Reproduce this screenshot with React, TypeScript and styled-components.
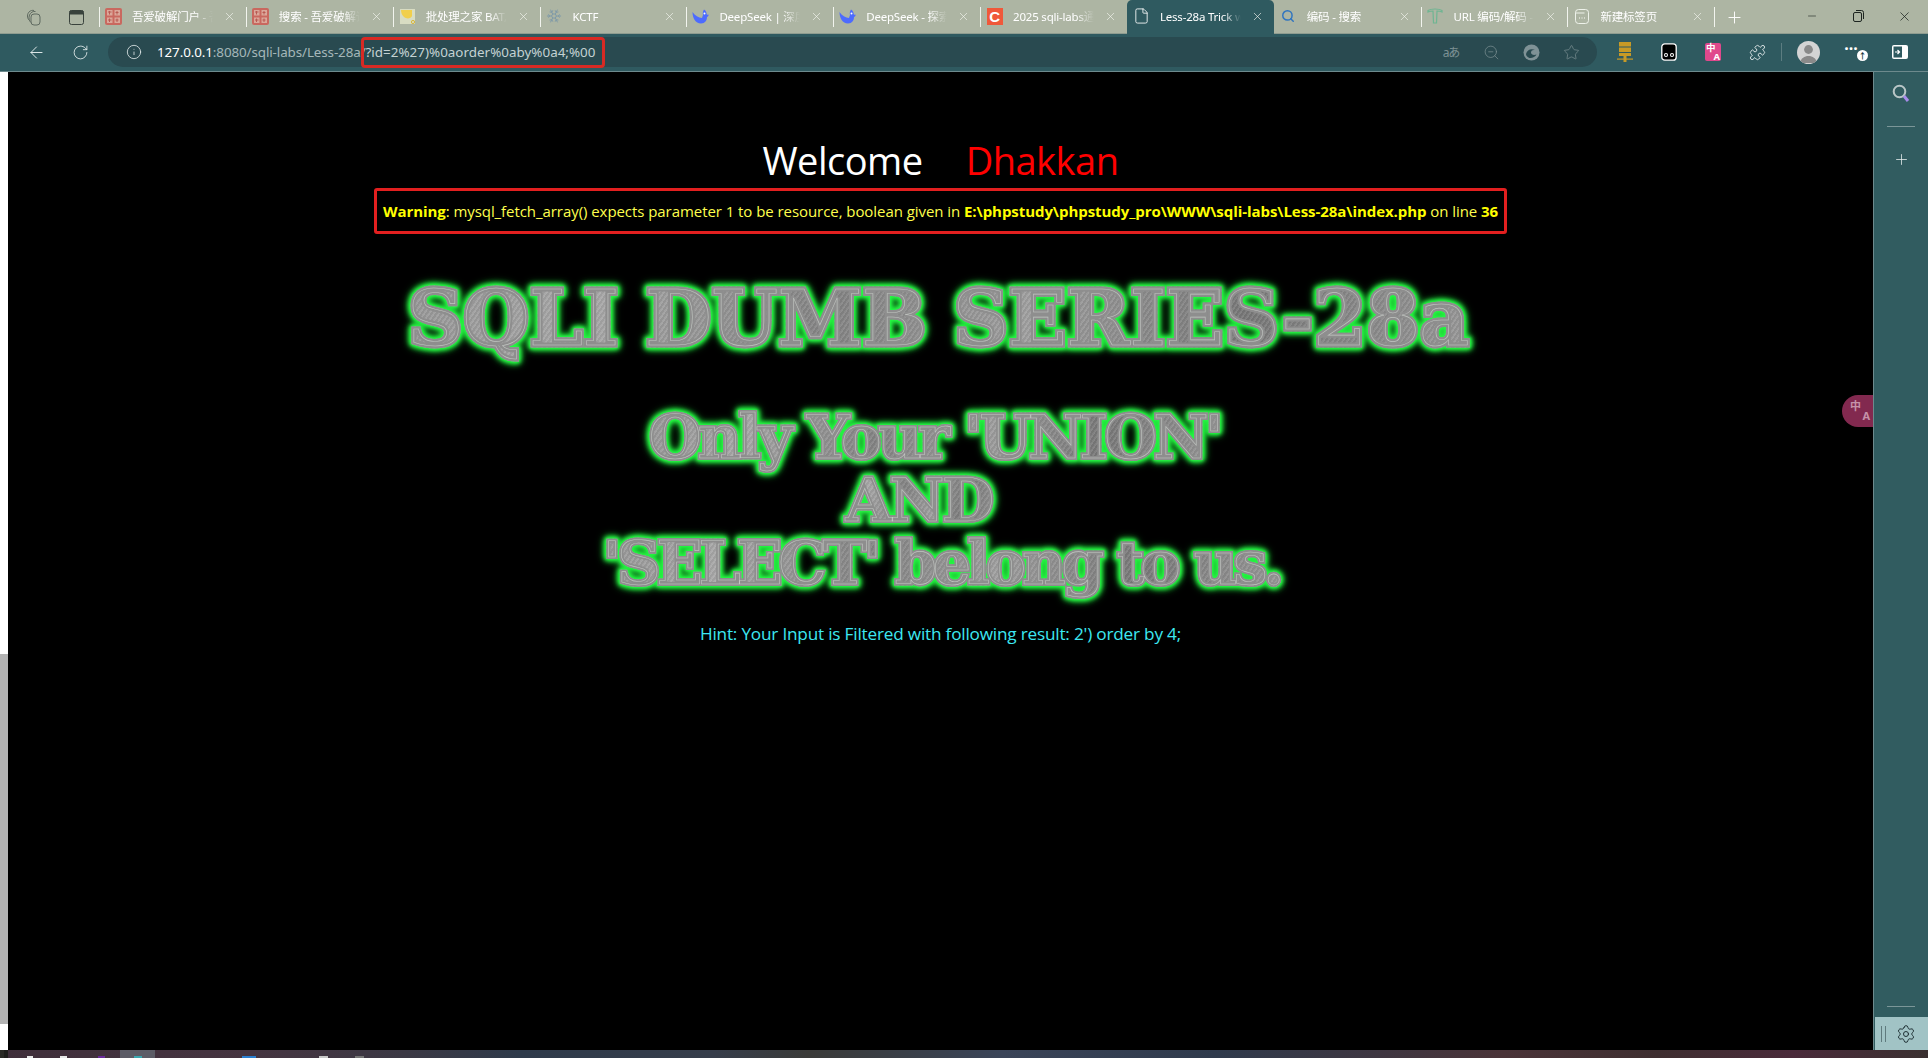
import React from "react";
import styled, { createGlobalStyle } from "styled-components";
import {
  ArrowLeft, RotateCw, Info, ZoomOut, Star, Puzzle, Plus, X, Minus, Settings, File, Search, Snowflake,
} from "lucide-react";

const Global = createGlobalStyle`
  html, body { margin: 0; padding: 0; background: #000; overflow: hidden; }
  * { box-sizing: border-box; }
`;

const UI = `"Noto Sans", "Noto Sans CJK SC", sans-serif`;
const PAGE = `"Open Sans", "Noto Sans", sans-serif`;

const Root = styled.div`
  width: 1928px; height: 1058px; display: flex; flex-direction: column; overflow: hidden; font-family: ${UI};
`;
const TabStrip = styled.div`
  height: 34px; flex: none; background: #adb5a3; display: flex; align-items: stretch; color: #fff;
  box-shadow: inset 0 -1px 0 #8f9c90;
`;
const StripIcon = styled.div`
  width: 42px; flex: none; display: flex; align-items: center; justify-content: center; color: #5f6a60;
`;
const StripLead = styled.div`
  width: 99px; flex: none; display: flex; padding-left: 13px;
`;
const Tab = styled.div<{ $active?: boolean; $sep?: boolean }>`
  width: 146.85px; flex: none; display: flex; align-items: center; padding: 0 10px 2px 6px; gap: 10px; position: relative;
  background: ${p => (p.$active ? "#2f5a60" : "transparent")};
  border-radius: ${p => (p.$active ? "5px 5px 0 0" : "0")};
  &::before {
    content: "";
    display: ${p => (p.$sep ? "block" : "none")};
    position: absolute; left: 0; top: 7px; bottom: 7px; width: 1px; background: #f2f4ee;
  }
`;
const Fav = styled.span`
  width: 17px; height: 17px; flex: none; display: flex; align-items: center; justify-content: center;
`;
const TabTitle = styled.span`
  flex: 1; min-width: 0; font-size: 11.5px; letter-spacing: -0.2px; white-space: nowrap; overflow: hidden;
  mask-image: linear-gradient(90deg, #000 78%, transparent 100%);
`;
const CloseWrap = styled.span`
  flex: none; display: flex; color: #f4f6f0;
`;
const NewTab = styled.div`
  width: 40px; flex: none; display: flex; align-items: center; justify-content: center; color: #fff; border-left: 1px solid #f2f4ee; margin: 7px 0 7px 0;
`;
const WinControls = styled.div`
  margin-left: auto; display: flex; width: 139px; color: #1d2420; padding-bottom: 2px;
`;
const WinButton = styled.div`
  flex: 1; display: flex; align-items: center; justify-content: center;
`;
const CFav = styled.span`
  width: 16px; height: 17px; background: #f0583a; color: #fff; font: 700 15px/17px "Liberation Sans", sans-serif; text-align: center;
`;

const Toolbar = styled.div`
  height: 38px; flex: none; background: #2f5a60; display: flex; align-items: center; color: #dfe8e8; border-bottom: 1px solid #6d8a8d; padding-bottom: 1px;
`;
const NavButton = styled.div`
  width: 44px; flex: none; display: flex; align-items: center; justify-content: center; color: #e6eeee;
`;
const NavGroup = styled.div`
  display: flex; width: 108px; padding-left: 14px; flex: none;
`;
const Address = styled.div`
  width: 1489px; height: 30px; flex: none; background: #294a50; border-radius: 15px; display: flex; align-items: center; padding: 0 6px 0 18px;
`;
const InfoWrap = styled.span`
  width: 31px; flex: none; display: flex; color: #e6eeee;
`;
const Url = styled.div`
  flex: 1; font-size: 13.4px; color: #a5b7b9; white-space: nowrap; display: flex; align-items: center; letter-spacing: -0.1px;
`;
const Host = styled.span`
  color: #fff;
`;
const Marked = styled.span`
  border: 3px solid #d82a24; border-radius: 4px; padding: 2px 7px 2px 2px; margin-left: -5px; color: #c4d2d3; line-height: 21px; letter-spacing: 0.02px;
`;
const AddressIcons = styled.div`
  display: flex; flex: none; color: #7d9194;
`;
const AddressIcon = styled.span`
  width: 40px; display: flex; align-items: center; justify-content: center; font-size: 12px; letter-spacing: -1px;
`;
const Extensions = styled.div`
  flex: 1; display: flex; align-items: center; padding-left: 6px;
`;
const Ext = styled.div<{ $w?: number }>`
  width: ${p => p.$w ?? 44}px; flex: none; display: flex; align-items: center; justify-content: center; position: relative; color: #f0f4f4;
`;
const ExtDivider = styled.span`
  width: 1px; height: 18px; background: #5c7d81; flex: none; margin: 0 4px 0 2px;
`;
const TileGlyphs = styled.span<{ $size: number }>`
  display: flex; flex-direction: column; font-weight: 700; font-size: ${p => p.$size}px; line-height: ${p => p.$size - 1}px; width: 100%;
`;
const GlyphTop = styled.span`
  text-align: left;
`;
const GlyphBottom = styled.span`
  text-align: right;
`;
const TranslateTile = styled.span`
  width: 16px; height: 18px; background: #e0488c; border-radius: 2px; color: #fff; display: flex; padding: 1px 1px 0;
`;
const Avatar = styled.span`
  width: 23px; height: 23px; border-radius: 50%; display: block; overflow: hidden;
`;
const UpdateBadge = styled.span`
  position: absolute; left: 27px; top: -1px; width: 11px; height: 11px; border-radius: 50%; background: #fff; color: #20383c; font-size: 8px; line-height: 11px; text-align: center; font-weight: 700;
`;
const Dots = styled.span`
  color: #fff; font-size: 16px; font-weight: 700; line-height: 10px; margin-top: -8px; margin-left: -6px;
`;

const Body = styled.div`
  flex: 1; min-height: 0; display: flex; position: relative;
`;
const Rail = styled.div`
  width: 8px; flex: none; background: #fff; padding-top: 582px;
`;
const RailThumb = styled.div`
  height: 370px; background: #b3b3b3;
`;
const Page = styled.main`
  flex: 1; background: #000; display: flex; flex-direction: column; align-items: center; font-family: ${PAGE}; padding-top: 64px;
`;
const Welcome = styled.div`
  display: flex; gap: 43px; font-size: 38px; line-height: 48px; color: #fff; letter-spacing: -0.5px;
`;
const Red = styled.span`
  color: #f00;
`;
const WarningBox = styled.div`
  margin-top: 4px; width: 1133px; height: 46px; border: 3px solid #e21f1f; border-radius: 3px; display: flex; align-items: center; justify-content: center;
  font-size: 15px; color: #ffff4d; white-space: pre; letter-spacing: -0.06px;
  b { color: #ffff00; font-weight: 700; }
`;
const Metal = styled.div<{ $size: number; $spacing: number; $line: number; $shift?: number; $stroke: number }>`
  position: relative; width: fit-content; margin: 0 auto; padding: 0 5px 8px;
  margin-bottom: -8px;
  transform: translateX(${p => p.$shift ?? 0}px);
  font-family: "DejaVu Serif", serif; font-weight: 700; white-space: nowrap; text-align: center;
  font-size: ${p => p.$size}px; letter-spacing: ${p => p.$spacing}px; line-height: ${p => p.$line}px;
  color: transparent;
  -webkit-text-stroke: ${p => p.$stroke}px #8e8e8e;
  background:
    repeating-linear-gradient(125deg, rgba(255,255,255,.08) 0 1px, rgba(0,0,0,.06) 1px 3px, rgba(255,255,255,.03) 3px 4px),
    linear-gradient(100deg, #9a9a9a 0%, #aaa 18%, #858585 40%, #a2a2a2 58%, #7a7a7a 78%, #9c9c9c 100%);
  -webkit-background-clip: text; background-clip: text;
  filter: drop-shadow(0 0 1px #2aff4a) drop-shadow(0 0 2px #24f040) drop-shadow(0 0 2px #24f040) drop-shadow(0 0 3px #1cd036);
  &::after {
    content: attr(data-text);
    position: absolute; left: 5px; top: 0;
    -webkit-text-stroke: 0.6px rgba(225,232,225,.6);
  }
`;
const TitleWrap = styled.div`
  margin-top: 40px; align-self: stretch;
`;
const SloganWrap = styled.div`
  margin-top: 42px; align-self: stretch;
`;
const Hint = styled.div`
  margin-top: 27px; font-size: 17.2px; line-height: 24px; color: #3de8f2; letter-spacing: -0.2px;
`;
const Sidebar = styled.aside`
  width: 55px; flex: none; background: #315c60; border-left: 1px solid #6d8a8d; display: flex; flex-direction: column; align-items: center; padding-top: 10px; color: #e6eeee;
`;
const SideIcon = styled.div`
  height: 24px; display: flex; align-items: center; justify-content: center;
`;
const SideRule = styled.div<{ $gap: number }>`
  width: 28px; height: 1px; flex: none; background: #7b9698; margin: ${p => p.$gap}px 0;
`;
const BottomRule = styled(SideRule)`
  margin-top: auto;
`;
const SideFoot = styled.div`
  align-self: stretch; margin-left: 1px; height: 33px; background: #a1c3c5; display: flex; align-items: center; gap: 10px; padding-left: 6px; color: #1f3034; margin-top: -1px;
`;
const SideBars = styled.span`
  width: 5px; height: 16px; border-left: 1px solid #5f7a7d; border-right: 1px solid #5f7a7d; display: block;
`;
const TranslatePill = styled.div`
  position: absolute; right: 55px; top: 323px; width: 31px; height: 32px; border-radius: 16px 0 0 16px; background: #82294f; color: #c592a8; display: flex; padding: 6px 3px 0 8px;
`;
const Taskbar = styled.footer`
  height: 8px; flex: none; display: flex; align-items: flex-end;
  background: linear-gradient(90deg, #3f2e3a 0, #453440 13%, #3b3844 21%, #2e3a4a 27%, #363d4a 37%, #3a3a38 42%, #3a4458 52%, #2f3a4c 63%, #4a3338 78%, #3e2e30 86%, #4a2a3a 93%, #3a3030 100%);
`;
const TaskCorner = styled.span`
  width: 8px; height: 8px; flex: none; background: #2a2a26; border-left: 3px solid #2a2a26; border-right: 4px solid #1e1e1c; display: block;
`;
const TaskItem = styled.span<{ $w: number; $left: number; $c: string }>`
  width: ${p => p.$w}px; height: 2px; margin-left: ${p => p.$left}px; background: ${p => p.$c}; flex: none; display: block;
`;
const TaskActive = styled.span`
  width: 35px; height: 8px; margin-left: 15px; background: #5c5c66; flex: none; display: flex; align-items: flex-end; justify-content: center;
`;

const Pojie = () => (
  <svg width="17" height="17" viewBox="0 0 17 17">
    <rect width="17" height="17" rx="2" fill="#c9685f" />
    <rect x="2" y="2" width="5.500" height="5.500" fill="#dba79a" />
    <rect x="9.500" y="2" width="5.500" height="5.500" fill="#dba79a" />
    <rect x="2" y="9.500" width="5.500" height="5.500" fill="#dba79a" />
    <rect x="9.500" y="9.500" width="5.500" height="5.500" fill="#dba79a" />
    <path d="M3 4h3.500M4.500 3v3.500M10.500 4.500h3M12 3v3.500M3 12h3.500M4.500 10.500V14M10.500 12h3M12 10.500V14" stroke="#b85a52" strokeWidth="1" />
  </svg>
);
const Bat = () => (
  <svg width="17" height="17" viewBox="0 0 17 17">
    <rect x="1" y="1" width="15" height="15" fill="#d8dcc2" />
    <path d="M2 2h11v6c-1 3-6 3-8 1S2 5 2 2z" fill="#f1cf4c" />
    <circle cx="14" cy="14" r="1.600" fill="none" stroke="#d7b63a" />
  </svg>
);
const Whale = () => (
  <svg width="17" height="15" viewBox="0 0 17 15">
    <path d="M.5 3C.5 9 3.500 14.500 9 14.500c4 0 6-3 6-6.500.8-.4 1.400-1 1.800-2.500-.8.4-1.400.4-2 0C14.500 3 13.500 1.200 12 .5c-1 1.500-1.500 3.500-1 5.500l-1 3C6.500 9 3 6.500.5 3z" fill="#4d6bfe" />
    <circle cx="12.500" cy="4.500" r="1" fill="#fff" />
  </svg>
);
const TFav = () => (
  <svg width="16" height="18" viewBox="0 0 16 18" fill="none" stroke="#6fb592" strokeWidth="1.200">
    <path d="M1 3.500c3-2 11-2 14 0v1.500c-2-.8-4-1-5-1l-.5 12h-3L6 4c-1 0-3 .2-5 1z" />
  </svg>
);
const NewTabFav = () => (
  <svg width="14" height="15" viewBox="0 0 14 15" fill="none" stroke="#eef2ea" strokeWidth="1">
    <rect x=".5" y=".5" width="13" height="14" rx="3" />
    <path d="M.5 4h9" />
    <path d="M4 9h.8M6.600 9h.8M9.200 9h.8" strokeWidth="1.300" />
  </svg>
);
const Workspaces = () => (
  <svg width="16" height="17" viewBox="0 0 16 17" fill="none" stroke="currentColor" strokeWidth="1">
    <rect x="5" y="5" width="9" height="11" rx="3" />
    <path d="M5 13.500C3 12 2.500 9 3.500 6 4.500 3.500 7 2 9.500 2.500M3 11C1 9 1 5 3 3c1.500-1.500 3.500-2 5-1.500" />
  </svg>
);
const TabPanel = () => (
  <svg width="15" height="15" viewBox="0 0 15 15" fill="none" stroke="#39423c" strokeWidth="1">
    <rect x=".5" y=".5" width="14" height="14" rx="2" />
    <path d="M1 1h13v3H1z" fill="#39423c" />
  </svg>
);
const Restore = () => (
  <svg width="11" height="12" viewBox="0 0 11 12" fill="none" stroke="currentColor" strokeWidth="1">
    <rect x=".5" y="2.500" width="8" height="9" rx="1.500" />
    <path d="M3 .5h5.500a2 2 0 0 1 2 2V9" />
  </svg>
);
const AutoRefresh = () => (
  <svg width="17" height="17" viewBox="0 0 17 17">
    <circle cx="8.500" cy="8.500" r="8" fill="#7f9296" />
    <path d="M3 10c1-4 5-6 9-4-3-.5-4 1-4 2.500 0 2 2.500 3 5.500 2-1.500 3-6 4.500-8 3-1.500-1-2.500-2-2.500-3.500z" fill="#294a50" />
  </svg>
);
const ServerExt = () => (
  <svg width="16" height="20" viewBox="0 0 16 20" fill="#c79a26">
    <rect x="2" y="0" width="12" height="4.500" />
    <rect x="2" y="5.500" width="12" height="4.500" />
    <rect x="2" y="11" width="12" height="3" />
    <path d="M0 16.500h16v1.200H0z" />
    <rect x="6.500" y="14" width="3" height="6" />
  </svg>
);
const GhostExt = () => (
  <svg width="16" height="18" viewBox="0 0 16 18">
    <rect x=".8" y=".8" width="14.400" height="16.400" rx="3" fill="#000" stroke="#fff" strokeWidth="1.300" />
    <circle cx="5" cy="12" r="2" fill="#fff" /><circle cx="11" cy="12" r="2" fill="#fff" />
    <circle cx="5" cy="12" r="1" fill="#000" /><circle cx="11" cy="12" r="1" fill="#000" />
  </svg>
);
const AvatarFace = () => (
  <svg width="23" height="23" viewBox="0 0 23 23">
    <rect width="23" height="23" fill="#d4d4d4" />
    <circle cx="11.500" cy="8.500" r="4.400" fill="#8a8a8a" />
    <path d="M3 22c1-5 4.500-7 8.500-7s7.500 2 8.500 7z" fill="#8a8a8a" />
  </svg>
);
const SidePanelToggle = () => (
  <svg width="16" height="14" viewBox="0 0 16 14">
    <rect width="16" height="14" rx="2" fill="#fff" />
    <rect x="1.500" y="1.500" width="8.500" height="11" fill="#2f5a60" />
    <path d="M3 7h4M5.500 5l2 2-2 2" stroke="#fff" strokeWidth="1.200" fill="none" />
  </svg>
);
const SideSearch = () => (
  <svg width="18" height="20" viewBox="0 0 18 20" fill="none">
    <circle cx="7.500" cy="7.500" r="5.800" stroke="#b9c6c7" strokeWidth="2" />
    <path d="M12 12l4 5" stroke="#a78bea" strokeWidth="3" />
  </svg>
);

const tabs: { title: string; icon: React.ReactNode; active?: boolean }[] = [
  { title: "吾爱破解门户 - 吾爱破解", icon: <Pojie /> },
  { title: "搜索 - 吾爱破解论坛", icon: <Pojie /> },
  { title: "批处理之家 BAT,CMD", icon: <Bat /> },
  { title: "KCTF", icon: <Snowflake size={16} color="#7f9aa8" strokeWidth={1.5} /> },
  { title: "DeepSeek | 深度求索", icon: <Whale /> },
  { title: "DeepSeek - 探索未至", icon: <Whale /> },
  { title: "2025 sqli-labs通关", icon: <CFav>C</CFav> },
  { title: "Less-28a Trick with", icon: <File size={18} strokeWidth={1.2} color="#fff" />, active: true },
  { title: "编码 - 搜索", icon: <Search size={14} color="#2f74c0" strokeWidth={2.5} /> },
  { title: "URL 编码/解码 - 在线", icon: <TFav /> },
  { title: "新建标签页", icon: <NewTabFav /> },
];

const MetalLine = ({ text, size, spacing, line, shift, stroke }: { text: string; size: number; spacing: number; line: number; shift?: number; stroke: number }) => (
  <Metal $size={size} $spacing={spacing} $line={line} $shift={shift} $stroke={stroke} data-text={text}>{text}</Metal>
);

export default function App() {
  return (
    <Root>
      <Global />
      <TabStrip>
        <StripLead>
          <StripIcon><Workspaces /></StripIcon>
          <StripIcon><TabPanel /></StripIcon>
        </StripLead>
        {tabs.map((t, i) => (
          <Tab key={t.title} $active={t.active} $sep={!t.active && !(tabs[i - 1] && tabs[i - 1].active)}>
            <Fav>{t.icon}</Fav>
            <TabTitle>{t.title}</TabTitle>
            <CloseWrap><X size={13} strokeWidth={1.2} /></CloseWrap>
          </Tab>
        ))}
        <NewTab><Plus size={19} strokeWidth={1.2} /></NewTab>
        <WinControls>
          <WinButton><Minus size={12} strokeWidth={1.2} /></WinButton>
          <WinButton><Restore /></WinButton>
          <WinButton><X size={15} strokeWidth={1.2} /></WinButton>
        </WinControls>
      </TabStrip>
      <Toolbar>
        <NavGroup>
          <NavButton><ArrowLeft size={19} strokeWidth={1.2} /></NavButton>
          <NavButton><RotateCw size={17} strokeWidth={1.2} /></NavButton>
        </NavGroup>
        <Address>
          <InfoWrap><Info size={16} strokeWidth={1.2} /></InfoWrap>
          <Url>
            <Host>127.0.0.1</Host>:8080/sqli-labs/Less-28a/
            <Marked>?id=2%27)%0aorder%0aby%0a4;%00</Marked>
          </Url>
          <AddressIcons>
            <AddressIcon>aあ</AddressIcon>
            <AddressIcon><ZoomOut size={17} strokeWidth={1} /></AddressIcon>
            <AddressIcon><AutoRefresh /></AddressIcon>
            <AddressIcon><Star size={17} strokeWidth={1} /></AddressIcon>
          </AddressIcons>
        </Address>
        <Extensions>
          <Ext><ServerExt /></Ext>
          <Ext><GhostExt /></Ext>
          <Ext><TranslateTile><TileGlyphs $size={9.5}><GlyphTop>中</GlyphTop><GlyphBottom>A</GlyphBottom></TileGlyphs></TranslateTile></Ext>
          <Ext><Puzzle size={17} strokeWidth={1.2} /></Ext>
          <ExtDivider />
          <Ext><Avatar><AvatarFace /></Avatar></Ext>
          <Ext $w={48}><Dots>···</Dots><UpdateBadge>↑</UpdateBadge></Ext>
          <Ext><SidePanelToggle /></Ext>
        </Extensions>
      </Toolbar>
      <Body>
        <Rail><RailThumb /></Rail>
        <Page>
          <Welcome>
            <span>Welcome</span>
            <Red>Dhakkan</Red>
          </Welcome>
          <WarningBox>
            <span><b>Warning</b>: mysql_fetch_array() expects parameter 1 to be resource, boolean given in <b>E:\phpstudy\phpstudy_pro\WWW\sqli-labs\Less-28a\index.php</b> on line <b>36</b></span>
          </WarningBox>
          <TitleWrap>
            <MetalLine text="SQLI DUMB SERIES-28a" size={76} spacing={0.2} line={90} shift={-2} stroke={5} />
          </TitleWrap>
          <SloganWrap>
            <MetalLine text="Only Your 'UNION'" size={60} spacing={-3.3} line={63} shift={-6} stroke={4} />
            <MetalLine text="AND" size={60} spacing={-2.5} line={63} shift={-22} stroke={4} />
            <MetalLine text="'SELECT' belong to us." size={60} spacing={-3.9} line={63} shift={1} stroke={4} />
          </SloganWrap>
          <Hint>Hint: Your Input is Filtered with following result: 2') order by 4;</Hint>
        </Page>
        <Sidebar>
          <SideIcon><SideSearch /></SideIcon>
          <SideRule $gap={20} />
          <SideIcon><Plus size={17} strokeWidth={1.1} /></SideIcon>
          <BottomRule $gap={11} />
          <SideFoot>
            <SideBars />
            <Settings size={20} strokeWidth={1.2} />
          </SideFoot>
        </Sidebar>
        <TranslatePill><TileGlyphs $size={11}><GlyphTop>中</GlyphTop><GlyphBottom>A</GlyphBottom></TileGlyphs></TranslatePill>
      </Body>
      <Taskbar>
        <TaskCorner />
        <TaskItem $w={6} $left={19} $c="#e8e8e8" />
        <TaskItem $w={7} $left={27} $c="#e8e8e8" />
        <TaskItem $w={7} $left={31} $c="#6a2a9a" />
        <TaskActive><TaskItem $w={8} $left={0} $c="#3aa8b0" /></TaskActive>
        <TaskItem $w={14} $left={87} $c="#2a7fd0" />
        <TaskItem $w={9} $left={63} $c="#c8c8c8" />
        <TaskItem $w={9} $left={27} $c="#777" />
      </Taskbar>
    </Root>
  );
}
